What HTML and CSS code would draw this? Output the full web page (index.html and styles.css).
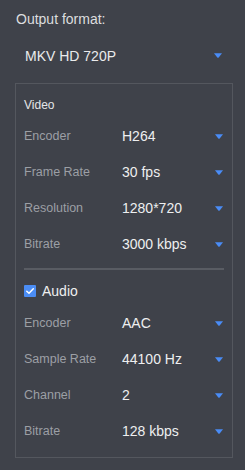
FILE: index.html
```html
<!DOCTYPE html>
<html>
<head>
<meta charset="utf-8">
<link rel="stylesheet" href="styles.css">
</head>
<body>
<div class="panel">
  <div class="title">Output format:</div>
  <div class="format">
    <span class="format-value">MKV HD 720P</span>
    <svg class="arrow" width="8" height="5" viewBox="0 0 8 5"><path d="M0 0.2 H8 L4.7 4.4 Q4 5.1 3.3 4.4 Z" fill="#4a8cf6"/></svg>
  </div>
  <div class="box">
    <div class="section-title">Video</div>
    <div class="rows">
      <div class="row"><span class="label">Encoder</span><span class="value">H264</span><svg class="arrow" width="8" height="5" viewBox="0 0 8 5"><path d="M0 0.2 H8 L4.7 4.4 Q4 5.1 3.3 4.4 Z" fill="#4a8cf6"/></svg></div>
      <div class="row"><span class="label">Frame Rate</span><span class="value">30 fps</span><svg class="arrow" width="8" height="5" viewBox="0 0 8 5"><path d="M0 0.2 H8 L4.7 4.4 Q4 5.1 3.3 4.4 Z" fill="#4a8cf6"/></svg></div>
      <div class="row"><span class="label">Resolution</span><span class="value">1280*720</span><svg class="arrow" width="8" height="5" viewBox="0 0 8 5"><path d="M0 0.2 H8 L4.7 4.4 Q4 5.1 3.3 4.4 Z" fill="#4a8cf6"/></svg></div>
      <div class="row"><span class="label">Bitrate</span><span class="value">3000 kbps</span><svg class="arrow" width="8" height="5" viewBox="0 0 8 5"><path d="M0 0.2 H8 L4.7 4.4 Q4 5.1 3.3 4.4 Z" fill="#4a8cf6"/></svg></div>
    </div>
    <div class="separator"></div>
    <div class="audio-head">
      <span class="checkbox"><svg width="12" height="12" viewBox="0 0 12 12"><path d="M2.8 6.2 L5 8.3 L9.3 3.8" fill="none" stroke="#ffffff" stroke-width="1.5" stroke-linecap="round" stroke-linejoin="round"/></svg></span>
      <span class="audio-label">Audio</span>
    </div>
    <div class="rows audio-rows">
      <div class="row"><span class="label">Encoder</span><span class="value">AAC</span><svg class="arrow" width="8" height="5" viewBox="0 0 8 5"><path d="M0 0.2 H8 L4.7 4.4 Q4 5.1 3.3 4.4 Z" fill="#4a8cf6"/></svg></div>
      <div class="row"><span class="label">Sample Rate</span><span class="value">44100 Hz</span><svg class="arrow" width="8" height="5" viewBox="0 0 8 5"><path d="M0 0.2 H8 L4.7 4.4 Q4 5.1 3.3 4.4 Z" fill="#4a8cf6"/></svg></div>
      <div class="row"><span class="label">Channel</span><span class="value">2</span><svg class="arrow" width="8" height="5" viewBox="0 0 8 5"><path d="M0 0.2 H8 L4.7 4.4 Q4 5.1 3.3 4.4 Z" fill="#4a8cf6"/></svg></div>
      <div class="row"><span class="label">Bitrate</span><span class="value">128 kbps</span><svg class="arrow" width="8" height="5" viewBox="0 0 8 5"><path d="M0 0.2 H8 L4.7 4.4 Q4 5.1 3.3 4.4 Z" fill="#4a8cf6"/></svg></div>
    </div>
  </div>
</div>
</body>
</html>
```
FILE: styles.css
```css
html, body {
  margin: 0;
  padding: 0;
  background: #3f424a;
}
body {
  width: 245px;
  height: 470px;
  font-family: "Liberation Sans", Arial, sans-serif;
  overflow: hidden;
}
.panel {
  display: flex;
  flex-direction: column;
}
.title {
  padding: 11px 0 0 16px;
  font-size: 14px;
  line-height: 16px;
  color: #dcdddf;
}
.format {
  margin-top: 13px;
  height: 31px;
  display: flex;
  align-items: center;
  padding: 0 23px 0 25px;
}
.format-value {
  flex: 1;
  font-size: 14px;
  color: #eaebec;
}
.arrow {
  display: block;
  flex: none;
}
.box {
  margin: 12px 12px 0 15px;
  border: 1px solid #54575e;
  padding: 14px 8px 8px 8px;
  display: flex;
  flex-direction: column;
}
.section-title {
  font-size: 12px;
  line-height: 14px;
  color: #e4e5e7;
}
.rows {
  margin-top: 6px;
  display: flex;
  flex-direction: column;
}
.row {
  height: 36px;
  display: flex;
  align-items: center;
  padding-right: 1px;
}
.label {
  width: 98px;
  flex: none;
  font-size: 12.5px;
  color: #9c9fa5;
}
.value {
  flex: 1;
  font-size: 14px;
  color: #eeeff0;
}
.separator {
  margin-top: 6px;
  height: 2px;
  background: #595c63;
}
.audio-head {
  margin-top: 14px;
  height: 14px;
  display: flex;
  align-items: center;
  gap: 6px;
}
.checkbox {
  width: 12px;
  height: 12px;
  border-radius: 1px;
  background: #4b8df5;
  display: flex;
}
.audio-label {
  font-size: 14px;
  color: #eeeff0;
}
.audio-rows {
  margin-top: 7px;
}
```
